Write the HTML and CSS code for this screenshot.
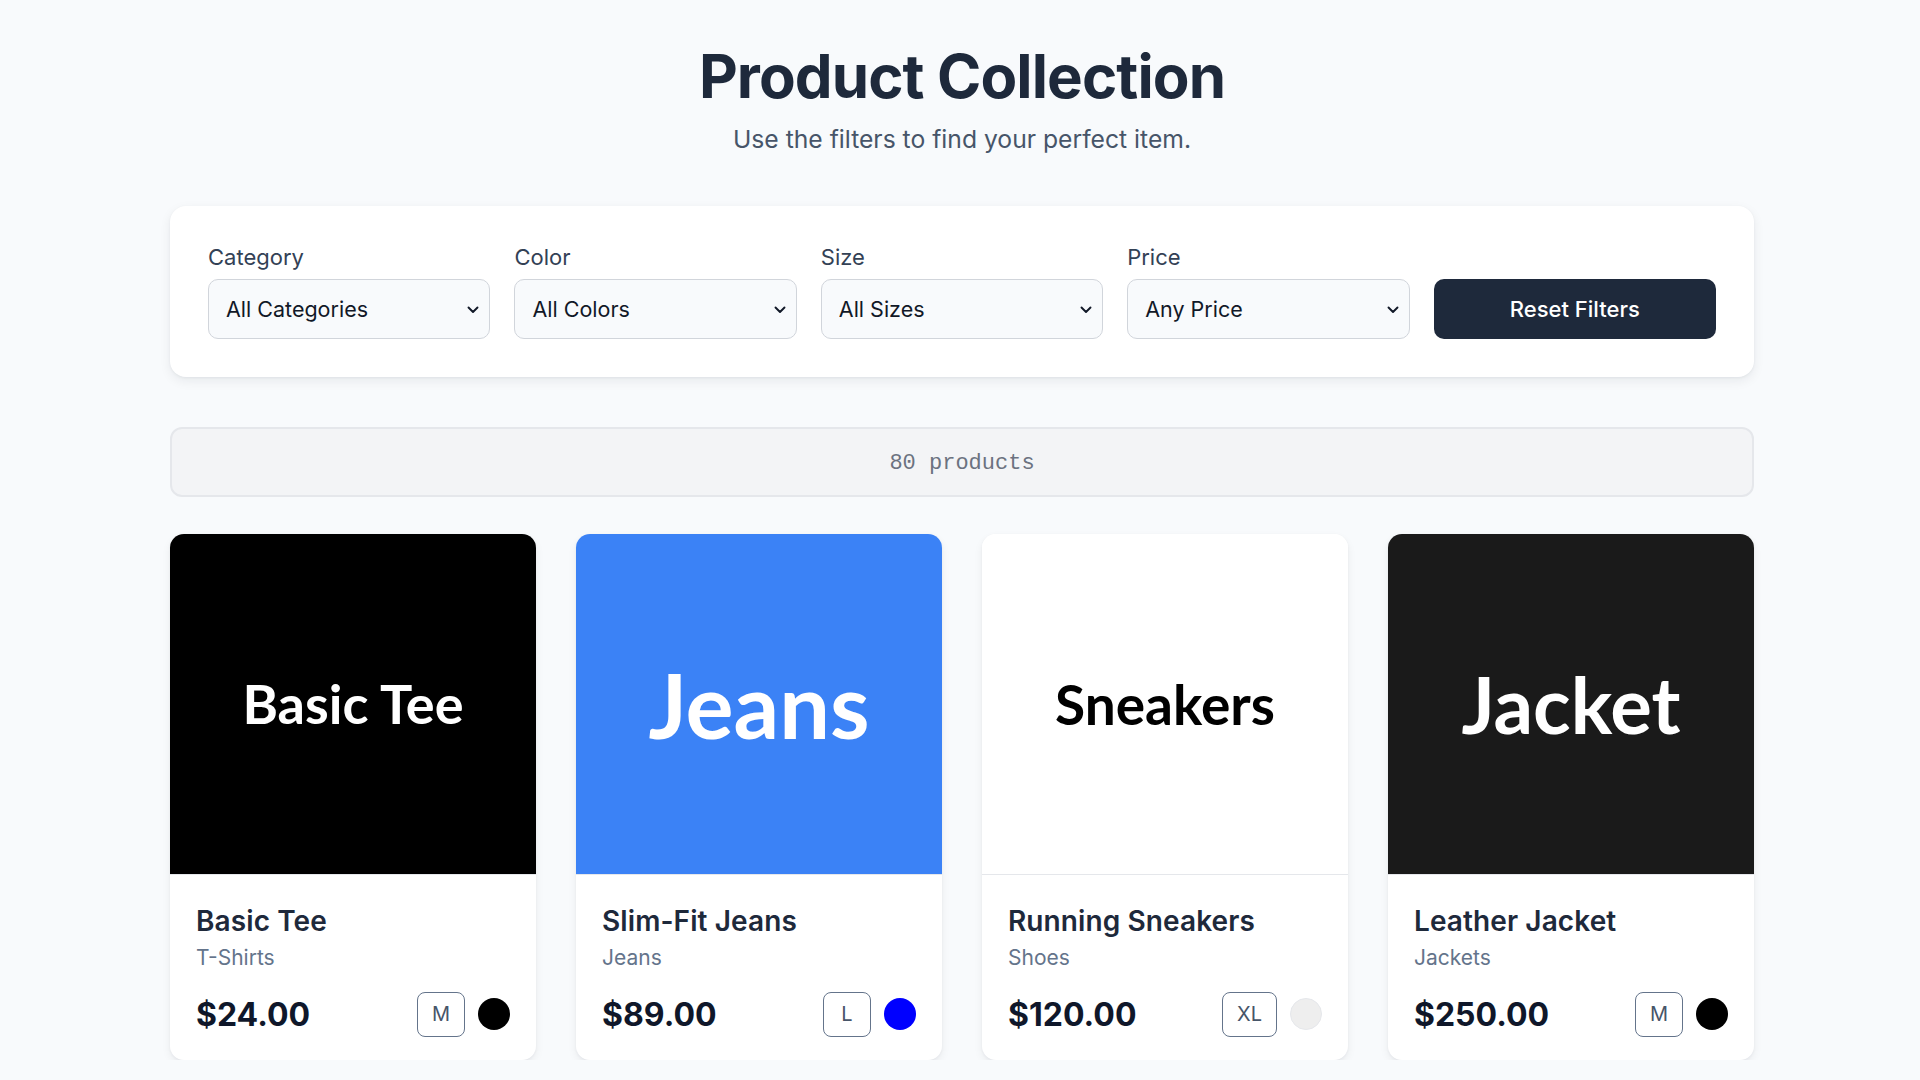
FILE: index.html
```html
<!DOCTYPE html>
<html lang="en">
<head>
<meta charset="utf-8">
<title>Product Collection</title>
<link rel="stylesheet" href="styles.css">
</head>
<body>
<main class="page">
  <header class="header">
    <h1 class="title">Product Collection</h1>
    <p class="subtitle">Use the filters to find your perfect item.</p>
  </header>

  <section class="filters">
    <div class="field">
      <label class="label">Category</label>
      <div class="select-wrap">
        <select class="select"><option>All Categories</option></select>
        <svg class="chev" viewBox="0 0 12 8" width="12" height="8"><path d="M1.5 1.5 6 6l4.5-4.5" fill="none" stroke="#111827" stroke-width="1.9" stroke-linecap="round" stroke-linejoin="round"/></svg>
      </div>
    </div>
    <div class="field">
      <label class="label">Color</label>
      <div class="select-wrap">
        <select class="select"><option>All Colors</option></select>
        <svg class="chev" viewBox="0 0 12 8" width="12" height="8"><path d="M1.5 1.5 6 6l4.5-4.5" fill="none" stroke="#111827" stroke-width="1.9" stroke-linecap="round" stroke-linejoin="round"/></svg>
      </div>
    </div>
    <div class="field">
      <label class="label">Size</label>
      <div class="select-wrap">
        <select class="select"><option>All Sizes</option></select>
        <svg class="chev" viewBox="0 0 12 8" width="12" height="8"><path d="M1.5 1.5 6 6l4.5-4.5" fill="none" stroke="#111827" stroke-width="1.9" stroke-linecap="round" stroke-linejoin="round"/></svg>
      </div>
    </div>
    <div class="field">
      <label class="label">Price</label>
      <div class="select-wrap">
        <select class="select"><option>Any Price</option></select>
        <svg class="chev" viewBox="0 0 12 8" width="12" height="8"><path d="M1.5 1.5 6 6l4.5-4.5" fill="none" stroke="#111827" stroke-width="1.9" stroke-linecap="round" stroke-linejoin="round"/></svg>
      </div>
    </div>
    <div class="field field-btn">
      <button class="reset">Reset Filters</button>
    </div>
  </section>

  <div class="counter">80 products</div>

  <section class="grid">
    <article class="card">
      <div class="thumb thumb-black"><span class="thumb-text t-tee">Basic Tee</span></div>
      <div class="body">
        <h2 class="name">Basic Tee</h2>
        <p class="cat">T-Shirts</p>
        <div class="row">
          <span class="price">$24.00</span>
          <div class="meta"><span class="size">M</span><span class="dot dot-black"></span></div>
        </div>
      </div>
    </article>
    <article class="card">
      <div class="thumb thumb-blue"><span class="thumb-text t-jeans">Jeans</span></div>
      <div class="body">
        <h2 class="name">Slim-Fit Jeans</h2>
        <p class="cat">Jeans</p>
        <div class="row">
          <span class="price">$89.00</span>
          <div class="meta"><span class="size">L</span><span class="dot dot-blue"></span></div>
        </div>
      </div>
    </article>
    <article class="card">
      <div class="thumb thumb-white"><span class="thumb-text t-sneak">Sneakers</span></div>
      <div class="body">
        <h2 class="name">Running Sneakers</h2>
        <p class="cat">Shoes</p>
        <div class="row">
          <span class="price">$120.00</span>
          <div class="meta"><span class="size">XL</span><span class="dot dot-white"></span></div>
        </div>
      </div>
    </article>
    <article class="card">
      <div class="thumb thumb-dark"><span class="thumb-text t-jacket">Jacket</span></div>
      <div class="body">
        <h2 class="name">Leather Jacket</h2>
        <p class="cat">Jackets</p>
        <div class="row">
          <span class="price">$250.00</span>
          <div class="meta"><span class="size">M</span><span class="dot dot-black"></span></div>
        </div>
      </div>
    </article>
  </section>
</main>
</body>
</html>
```

FILE: styles.css
```css
* { box-sizing: border-box; }
html, body { margin: 0; padding: 0; }
body {
  background: #f8fafc;
  font-family: Inter, "Noto Sans", sans-serif;
  color: #1e293b;
  padding-left: 4px;
}
.page {
  width: 1584px;
  margin: 0 auto;
  padding-top: 40px;
}
.header { text-align: center; }
.title {
  margin: 0;
  font-size: 60px;
  line-height: 72px;
  font-weight: 700;
  color: #1e293b;
  letter-spacing: -0.9px;
}
.subtitle {
  margin: 12px 0 0;
  font-size: 24.7px;
  line-height: 30px;
  color: #475569;
}
.filters {
  margin-top: 52px;
  background: #fff;
  border-radius: 16px;
  box-shadow: 0 4px 12px rgba(15, 23, 42, 0.07), 0 1px 3px rgba(15, 23, 42, 0.05);
  padding: 38px;
  display: grid;
  grid-template-columns: repeat(5, 1fr);
  gap: 24px;
  align-items: end;
}
.field { display: flex; flex-direction: column; }
.label {
  font-size: 22px;
  line-height: 27px;
  color: #334155;
  margin-bottom: 8px;
}
.select-wrap { position: relative; }
.select {
  appearance: none;
  -webkit-appearance: none;
  width: 100%;
  height: 60px;
  padding: 0 40px 0 17px;
  font-family: inherit;
  font-size: 21.5px;
  color: #111827;
  background: #f8fafc;
  border: 1.5px solid #d1d5db;
  border-radius: 10px;
}
.chev {
  position: absolute;
  right: 11px;
  top: 27px;
  pointer-events: none;
}
.reset {
  height: 60px;
  width: 100%;
  border: 0;
  border-radius: 10px;
  background: #1e293b;
  color: #fff;
  font-family: inherit;
  font-size: 22px;
  font-weight: 500;
}
.counter {
  margin-top: 50px;
  background: #f3f4f6;
  border: 2px solid #e5e7eb;
  border-radius: 12px;
  padding: 22px 20px 18px;
  text-align: center;
  font-family: "Liberation Mono", monospace;
  font-size: 22px;
  line-height: 26px;
  color: #6b7280;
}
.grid {
  margin-top: 37px;
  display: grid;
  grid-template-columns: repeat(4, 1fr);
  gap: 40px;
}
.card {
  background: #fff;
  border-radius: 14px;
  overflow: hidden;
  box-shadow: 0 4px 10px rgba(15, 23, 42, 0.06), 0 1px 3px rgba(15, 23, 42, 0.05);
}
.thumb {
  height: 341px;
  display: flex;
  align-items: center;
  justify-content: center;
  border-bottom: 1px solid #e5e7eb;
}
.thumb-black { background: #000; color: #fff; }
.thumb-blue { background: #3b82f6; color: #fff; }
.thumb-white { background: #fff; color: #000; }
.thumb-dark { background: #1a1a1a; color: #fff; }
.thumb-text {
  font-family: Lato, sans-serif;
  font-weight: 700;
  line-height: 1;
}
.t-tee { font-size: 54px; }
.t-jeans { font-size: 90px; }
.t-sneak { font-size: 55px; }
.t-jacket { font-size: 78px; }
.body { padding: 30px 26px 23px; }
.name {
  margin: 0;
  font-size: 28px;
  line-height: 32px;
  font-weight: 600;
  color: #1e293b;
  letter-spacing: 0.1px;
}
.cat {
  margin: 7px 0 0;
  font-size: 21px;
  line-height: 28px;
  color: #64748b;
}
.row {
  margin-top: 19px;
  height: 46px;
  display: flex;
  align-items: center;
  justify-content: space-between;
}
.price {
  font-size: 32px;
  font-weight: 700;
  color: #0f172a;
}
.meta { display: flex; align-items: center; gap: 13px; }
.size {
  min-width: 48px;
  height: 45px;
  padding: 0 14px;
  display: flex;
  align-items: center;
  justify-content: center;
  border: 1.5px solid #64748b;
  border-radius: 8px;
  font-size: 20px;
  color: #475569;
}
.dot {
  width: 32px;
  height: 32px;
  border-radius: 50%;
}
.dot-black { background: #000; }
.dot-blue { background: #0000ff; }
.dot-white { background: #eeeeee; border: 1px solid #e5e7eb; }
```
